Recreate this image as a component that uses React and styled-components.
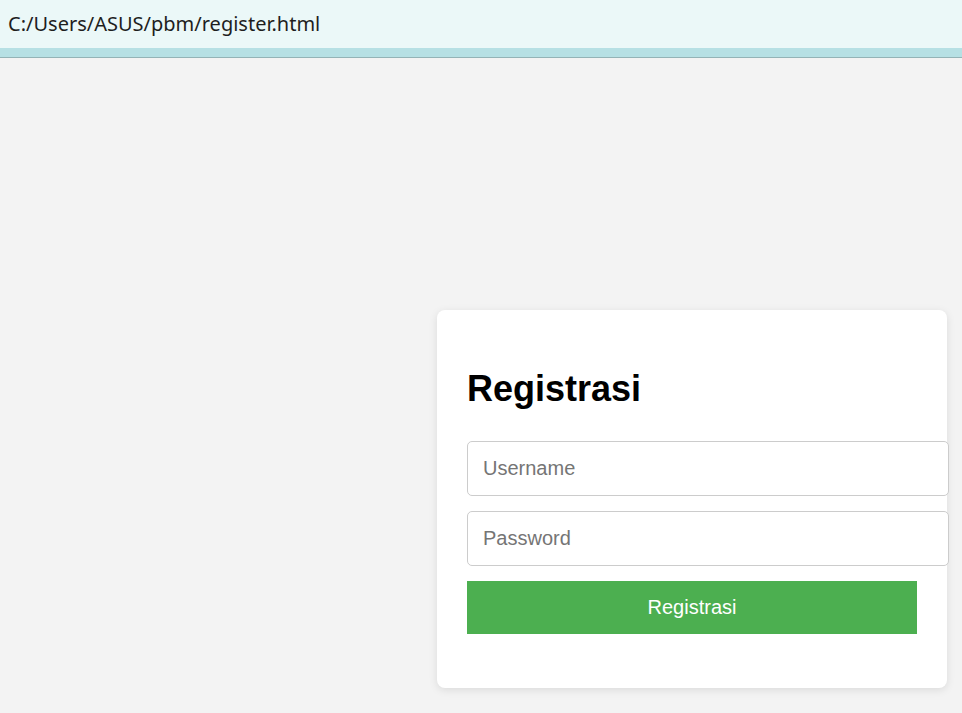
import React from "react";
import styled, { createGlobalStyle } from "styled-components";

const GlobalStyle = createGlobalStyle`
  * { box-sizing: content-box; }
  html, body {
    margin: 0;
    padding: 0;
    background: #f3f3f3;
    font-family: "Liberation Sans", Arial, sans-serif;
  }
`;

const Page = styled.div`
  display: flex;
  flex-direction: column;
  min-height: 713px;
  overflow: hidden;
`;

const AddressBar = styled.div`
  height: 46px;
  display: flex;
  align-items: center;
  padding: 0 0 2px 8px;
  background: #ebf8f8;
  border-bottom: 9px solid #b6e0e4;
  box-shadow: 0 1px 0 #93b3b6;
  font-family: "Noto Sans", "Open Sans", sans-serif;
  font-size: 20px;
  color: #1e1e1e;
`;

const Main = styled.main`
  flex: 1;
  display: flex;
  justify-content: flex-end;
  align-items: flex-start;
  padding: 253px 15px 0 0;
`;

const Card = styled.div`
  width: 450px;
  padding: 30px 30px 24px;
  background: #fff;
  border-radius: 8px;
  box-shadow: 0 2px 8px rgba(0, 0, 0, 0.1);
`;

const Title = styled.h2`
  margin: 29px 0 32px;
  font-size: 36px;
  line-height: 40px;
  font-weight: bold;
  color: #000;
`;

const Form = styled.form`
  display: flex;
  flex-direction: column;
  gap: 15px;
  margin-bottom: 30px;
`;

const Input = styled.input`
  display: block;
  width: 100%;
  height: 53px;
  padding: 0 15px;
  border: 1px solid #cccccc;
  border-radius: 5px;
  background: #fff;
  font-family: "Liberation Sans", Arial, sans-serif;
  font-size: 20px;
  color: #222;
  outline: none;

  &::placeholder {
    color: #757575;
  }
`;

const Button = styled.button`
  display: block;
  width: 100%;
  height: 53px;
  padding: 0;
  border: none;
  background: #4caf50;
  color: #fff;
  font-family: "Liberation Sans", Arial, sans-serif;
  font-size: 20px;
  cursor: pointer;
`;

export default function App() {
  return (
    <>
      <GlobalStyle />
      <Page>
        <AddressBar>C:/Users/ASUS/pbm/register.html</AddressBar>
        <Main>
          <Card>
            <Title>Registrasi</Title>
            <Form onSubmit={(e) => e.preventDefault()}>
              <Input type="text" placeholder="Username" />
              <Input type="password" placeholder="Password" />
              <Button type="submit">Registrasi</Button>
            </Form>
          </Card>
        </Main>
      </Page>
    </>
  );
}
